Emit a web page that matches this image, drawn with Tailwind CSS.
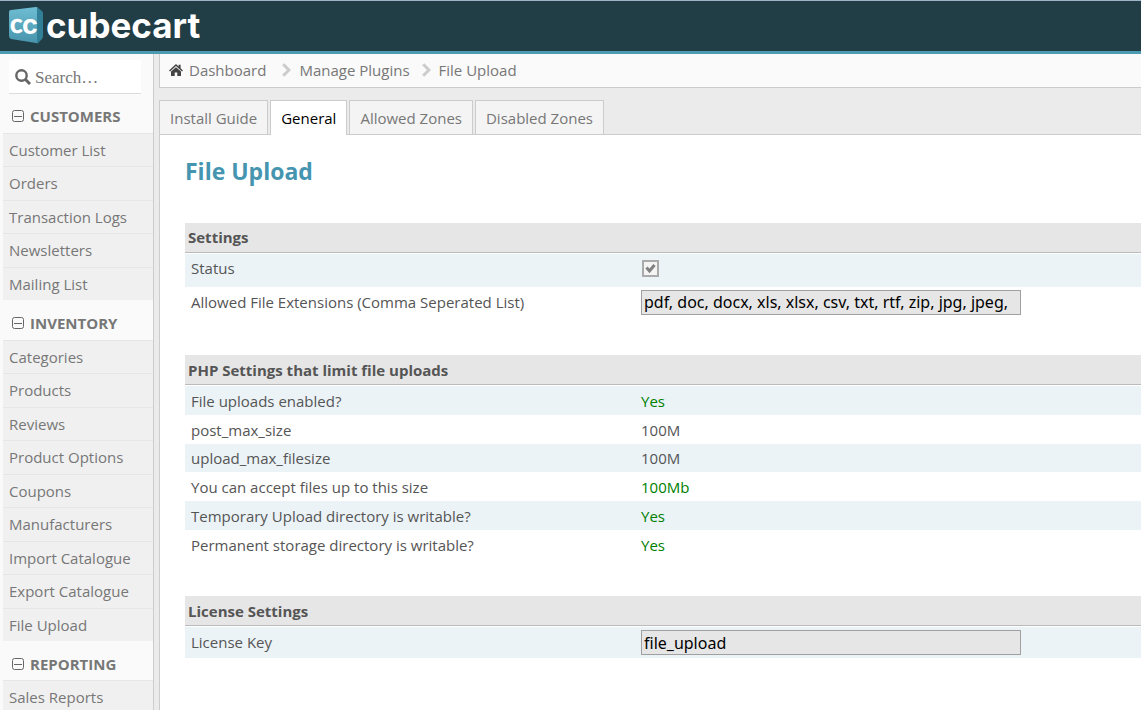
<!DOCTYPE html>
<html lang="en">
<head>
    <meta charset="UTF-8">
    <meta name="viewport" content="width=device-width, initial-scale=1.0">
    <title>File Upload - CubeCart</title>
    <script src="https://cdn.jsdelivr.net/npm/@tailwindcss/browser@4"></script>
</head>
<body class="h-screen flex flex-col overflow-hidden bg-[#ebebeb] font-['Open_Sans',sans-serif] text-[15px] leading-5 text-[#555]">
    <!-- Top bar -->
    <header class="shrink-0 h-[54px] bg-[#213d45] border-t border-t-[#9fb4c8] border-b-3 border-b-[#4d9ab3]">
        <a href="#" class="block w-[212px]" aria-label="CubeCart">
            <svg width="212" height="50" viewBox="0 1 212 50">
                <defs>
                    <linearGradient id="cube" x1="0" y1="0" x2="0" y2="1">
                        <stop offset="0" stop-color="#6fbdd2"/>
                        <stop offset="1" stop-color="#4794ac"/>
                    </linearGradient>
                </defs>
                <path d="M11 10 L36 7 Q38 7 38 9 V42 Q38 44 36 43 L11 39 Q9 38 9 36 V12 Q9 10 11 10Z" fill="url(#cube)"/>
                <path d="M37 7 L42 11 Q43 12 43 14 V36 Q43 38 42 39 L37 44Z" fill="#327f98"/>
                <text y="33" font-weight="700" fill="#fff"><tspan x="10" font-family="Lato" font-size="26" stroke="#fff" stroke-width=".5">c</tspan><tspan x="22" y="34" font-family="Inter" font-size="27">c</tspan></text>
                <text x="46" y="38" font-family="Inter" font-weight="700" font-size="35" fill="#fff">cubecart</text>
            </svg>
        </a>
    </header>

    <div class="flex flex-1 min-h-0">
        <!-- Sidebar -->
        <aside class="w-[154px] shrink-0 overflow-hidden bg-[#fafafa] border-r border-[#ccc] pl-[3px] pt-1.5 text-[#777]">
            <label class="flex items-center gap-1 w-[132px] h-[34px] ml-1.5 pl-1.5 bg-white border-b border-[#ddd]">
                <svg class="shrink-0" width="16" height="16" viewBox="0 0 16 16" fill="none" stroke="#666">
                    <circle cx="6.5" cy="6.5" r="5.2" stroke-width="2.4"/>
                    <path d="M10.5 10.5 L15 15" stroke-width="3"/>
                </svg>
                <input type="search" aria-label="Search" placeholder="Search…" class="w-full min-w-0 pt-0.5 font-['Liberation_Serif',serif] text-[17px] leading-5 outline-none placeholder:text-[#777]">
            </label>

            <nav>
                <h3 class="flex items-center gap-1.5 h-[39px] pt-1 pl-[9px] font-bold">
                    <svg width="12" height="12" viewBox="0 0 12 12" fill="none" stroke="#666"><rect x=".5" y=".5" width="11" height="11" rx="2"/><path d="M2 6.5 H10"/></svg>
                    CUSTOMERS
                </h3>
                <ul class="bg-[#f0f0f0]">
                    <li class="h-[33px] even:h-[34px] border-t border-[#e6e6e6] pl-1.5 pt-1.5"><a href="#">Customer List</a></li>
                    <li class="h-[33px] even:h-[34px] border-t border-[#e6e6e6] pl-1.5 pt-1.5"><a href="#">Orders</a></li>
                    <li class="h-[33px] even:h-[34px] border-t border-[#e6e6e6] pl-1.5 pt-1.5"><a href="#">Transaction Logs</a></li>
                    <li class="h-[33px] even:h-[34px] border-t border-[#e6e6e6] pl-1.5 pt-1.5"><a href="#">Newsletters</a></li>
                    <li class="h-[33px] even:h-[34px] border-t border-[#e6e6e6] pl-1.5 pt-1.5"><a href="#">Mailing List</a></li>
                </ul>

                <h3 class="flex items-center gap-1.5 h-10 pt-1.5 pl-[9px] font-bold">
                    <svg width="12" height="12" viewBox="0 0 12 12" fill="none" stroke="#666"><rect x=".5" y=".5" width="11" height="11" rx="2"/><path d="M2 6.5 H10"/></svg>
                    INVENTORY
                </h3>
                <ul class="bg-[#f0f0f0]">
                    <li class="h-[33px] even:h-[34px] border-t border-[#e6e6e6] pl-1.5 pt-1.5"><a href="#">Categories</a></li>
                    <li class="h-[33px] even:h-[34px] border-t border-[#e6e6e6] pl-1.5 pt-1.5"><a href="#">Products</a></li>
                    <li class="h-[33px] even:h-[34px] border-t border-[#e6e6e6] pl-1.5 pt-1.5"><a href="#">Reviews</a></li>
                    <li class="h-[33px] even:h-[34px] border-t border-[#e6e6e6] pl-1.5 pt-1.5"><a href="#">Product Options</a></li>
                    <li class="h-[33px] even:h-[34px] border-t border-[#e6e6e6] pl-1.5 pt-1.5"><a href="#">Coupons</a></li>
                    <li class="h-[33px] even:h-[34px] border-t border-[#e6e6e6] pl-1.5 pt-1.5"><a href="#">Manufacturers</a></li>
                    <li class="h-[33px] even:h-[34px] border-t border-[#e6e6e6] pl-1.5 pt-1.5"><a href="#">Import Catalogue</a></li>
                    <li class="h-[33px] even:h-[34px] border-t border-[#e6e6e6] pl-1.5 pt-1.5"><a href="#">Export Catalogue</a></li>
                    <li class="h-[33px] even:h-[34px] border-t border-[#e6e6e6] pl-1.5 pt-1.5"><a href="#">File Upload</a></li>
                </ul>

                <h3 class="flex items-center gap-1.5 h-[39px] pt-1.5 pl-[9px] font-bold">
                    <svg width="12" height="12" viewBox="0 0 12 12" fill="none" stroke="#666"><rect x=".5" y=".5" width="11" height="11" rx="2"/><path d="M2 6.5 H10"/></svg>
                    REPORTING
                </h3>
                <ul class="bg-[#f0f0f0]">
                    <li class="h-[33px] even:h-[34px] border-t border-[#e6e6e6] pl-1.5 pt-1.5"><a href="#">Sales Reports</a></li>
                </ul>
            </nav>
        </aside>

        <main class="flex flex-col flex-1 min-w-0 ml-[5px]">
            <!-- Breadcrumbs -->
            <nav class="flex items-center h-[34px] shrink-0 pl-[9px] pb-0.5 bg-[#fafafa] border-l border-b border-[#ccc] text-[#777]">
                <a href="#" class="flex items-center gap-1.5">
                    <svg width="14" height="12" viewBox="0 0 14 12" fill="#444">
                        <path d="M7 0 L9.6 2.4 V.8 H11.6 V4.2 L14 6.4 L13 7.4 L7 2 L1 7.4 L0 6.4Z"/>
                        <path d="M7 3.2 L12 7.6 V12 H8.3 V8.4 H5.7 V12 H2 V7.6Z"/>
                    </svg>
                    Dashboard
                </a>
                <svg class="ml-4 mr-2" width="9" height="14" viewBox="0 0 9 14" fill="none" stroke="#ccc" stroke-width="3"><path d="M1.2 1.2 L7 7 L1.2 12.8"/></svg>
                <a href="#">Manage Plugins</a>
                <svg class="ml-3 mr-2" width="9" height="14" viewBox="0 0 9 14" fill="none" stroke="#ccc" stroke-width="3"><path d="M1.2 1.2 L7 7 L1.2 12.8"/></svg>
                <a href="#">File Upload</a>
            </nav>

            <!-- Tabs -->
            <div class="flex gap-0.5 mt-3 shrink-0 text-[#777]" role="tablist">
                <button role="tab" class="h-[34px] px-2.5 border border-b-0 border-[#ccc] bg-[#f4f4f4]">Install Guide</button>
                <button role="tab" aria-selected="true" class="relative z-10 h-[35px] -mb-px px-2.5 border border-b-0 border-[#ccc] bg-white text-black">General</button>
                <button role="tab" class="h-[34px] px-2.5 border border-b-0 border-[#ccc] bg-[#f4f4f4]">Allowed Zones</button>
                <button role="tab" class="h-[34px] px-2.5 border border-b-0 border-[#ccc] bg-[#f4f4f4]">Disabled Zones</button>
            </div>

            <!-- Module settings -->
            <form class="flex-1 min-h-0 overflow-hidden bg-white border-l border-t border-[#ccc] pl-[25px] pt-5">
                <h1 class="text-[23px] leading-8 font-bold text-[#4595b0]">File Upload</h1>

                <table class="w-full mt-9 table-fixed border-separate border-spacing-0">
                    <colgroup><col class="w-[456px]"><col></colgroup>
                    <thead>
                        <tr><th colspan="2" class="h-[30px] pl-[3px] pb-0.5 text-left bg-[#e6e6e6] border-b border-[#bbb]">Settings</th></tr>
                    </thead>
                    <tbody>
                        <tr class="h-[34px] bg-[#ebf3f7]">
                            <td class="pl-1.5 pb-1.5 border-t border-white"><label for="status">Status</label></td>
                            <td class="border-t border-white">
                                <input id="status" type="checkbox" checked class="peer sr-only">
                                <label for="status" class="block w-[17px] h-[17px] ml-px mb-1" aria-label="Status">
                                    <svg width="17" height="17" viewBox="0 0 17 17"><rect x="1" y="1" width="15" height="15" fill="#f4f4f4" stroke="#aaa" stroke-width="2"/><path d="M4.5 7.5 L7.5 11 L12.5 5" fill="none" stroke="#808080" stroke-width="3"/></svg>
                                </label>
                            </td>
                        </tr>
                        <tr class="h-8">
                            <td class="pl-1.5 pb-0.5"><label for="extensions">Allowed File Extensions (Comma Seperated List)</label></td>
                            <td class="pb-0.5"><input id="extensions" type="text" value="pdf, doc, docx, xls, xlsx, csv, txt, rtf, zip, jpg, jpeg," class="block w-[380px] h-[25px] px-0.5 bg-[#e6e6e6] border border-[#a0a0a0] font-['Noto_Sans',sans-serif] text-base text-black"></td>
                        </tr>
                    </tbody>
                </table>

                <table class="w-full mt-9 table-fixed border-separate border-spacing-0">
                    <colgroup><col class="w-[456px]"><col></colgroup>
                    <thead>
                        <tr><th colspan="2" class="h-[30px] pl-[3px] text-left bg-[#e6e6e6] border-b border-[#bbb]">PHP Settings that limit file uploads</th></tr>
                    </thead>
                    <tbody>
                        <tr class="h-[30px] bg-[#ebf3f7]"><td class="pl-1.5 border-t border-white">File uploads enabled?</td><td class="border-t border-white text-[#008000]">Yes</td></tr>
                        <tr class="h-[29px]"><td class="pl-1.5">post_max_size</td><td>100M</td></tr>
                        <tr class="h-7 bg-[#ebf3f7]"><td class="pl-1.5">upload_max_filesize</td><td>100M</td></tr>
                        <tr class="h-[29px]"><td class="pl-1.5">You can accept files up to this size</td><td class="text-[#008000]">100Mb</td></tr>
                        <tr class="h-[29px] bg-[#ebf3f7]"><td class="pl-1.5">Temporary Upload directory is writable?</td><td class="text-[#008000]">Yes</td></tr>
                        <tr class="h-[29px]"><td class="pl-1.5">Permanent storage directory is writable?</td><td class="text-[#008000]">Yes</td></tr>
                    </tbody>
                </table>

                <table class="w-full mt-[37px] table-fixed border-separate border-spacing-0">
                    <colgroup><col class="w-[456px]"><col></colgroup>
                    <thead>
                        <tr><th colspan="2" class="h-[30px] pl-[3px] text-left bg-[#e6e6e6] border-b border-[#bbb]">License Settings</th></tr>
                    </thead>
                    <tbody>
                        <tr class="h-8 bg-[#ebf3f7]">
                            <td class="pl-1.5 pb-0.5 border-t border-white"><label for="license">License Key</label></td>
                            <td class="border-t border-white"><input id="license" type="text" value="file_upload" class="block w-[380px] h-[25px] px-0.5 bg-[#e6e6e6] border border-[#a0a0a0] font-['Noto_Sans',sans-serif] text-base text-black"></td>
                        </tr>
                    </tbody>
                </table>
            </form>
        </main>
    </div>
</body>
</html>
